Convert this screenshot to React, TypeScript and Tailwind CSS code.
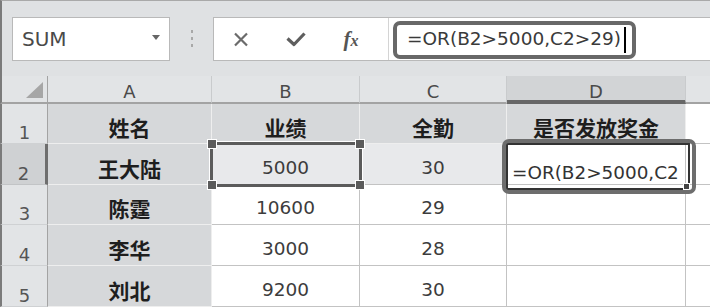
import React from 'react'

type Kind = 'rowhead' | 'rowheadSel' | 'gray' | 'light' | 'white' | 'edge'

const FORMULA = '=OR(B2>5000,C2>29)'

const rows: { n: string; cells: { text?: string; kind: Kind; cjk?: boolean }[] }[] = [
  {
    n: '1',
    cells: [
      { text: '姓名', kind: 'gray', cjk: true },
      { text: '业绩', kind: 'gray', cjk: true },
      { text: '全勤', kind: 'gray', cjk: true },
      { text: '是否发放奖金', kind: 'gray', cjk: true },
      { kind: 'edge' },
    ],
  },
  {
    n: '2',
    cells: [
      { text: '王大陆', kind: 'gray', cjk: true },
      { text: '5000', kind: 'light' },
      { text: '30', kind: 'light' },
      { kind: 'white' },
      { kind: 'edge' },
    ],
  },
  {
    n: '3',
    cells: [
      { text: '陈霆', kind: 'gray', cjk: true },
      { text: '10600', kind: 'white' },
      { text: '29', kind: 'white' },
      { kind: 'white' },
      { kind: 'edge' },
    ],
  },
  {
    n: '4',
    cells: [
      { text: '李华', kind: 'gray', cjk: true },
      { text: '3000', kind: 'white' },
      { text: '28', kind: 'white' },
      { kind: 'white' },
      { kind: 'edge' },
    ],
  },
  {
    n: '5',
    cells: [
      { text: '刘北', kind: 'gray', cjk: true },
      { text: '9200', kind: 'white' },
      { text: '30', kind: 'white' },
      { kind: 'white' },
      { kind: 'edge' },
    ],
  },
]

const cellClass: Record<Kind, string> = {
  rowhead: 'bg-[#e2e4e6] border-l-2 border-l-[#7b7b7b] border-r border-r-[#a3a3a3] border-b border-b-[#cfd1d3]',
  rowheadSel: 'bg-[#cfd1d3] border-l-2 border-l-[#7b7b7b] border-r-[3px] border-r-[#6e6e6e] border-b border-b-[#c2c4c6]',
  gray: 'bg-[#d6d8da] border-r border-r-[#eeeeee] border-b border-b-[#eeeeee]',
  light: 'bg-[#e8e9eb] border-r border-r-[#c3c3c3] border-b border-b-[#c3c3c3]',
  white: 'bg-white border-r border-r-[#c3c3c3] border-b border-b-[#c3c3c3]',
  edge: 'bg-white border-b border-b-[#c3c3c3]',
}

const Handle = ({ x, y }: { x: number; y: number }) => (
  <div
    className="absolute w-[10px] h-[10px] bg-[#5b5b5b] border border-white"
    style={{ left: x - 5, top: y - 5 }}
  />
)

export default function App() {
  return (
    <div className="w-[710px] h-[307px] bg-[#dfe1e3] overflow-hidden font-['DejaVu_Sans',sans-serif]">
      {/* formula bar */}
      <div className="h-[76px] border-t border-t-[#a9a9a9] border-l-2 border-l-[#7b7b7b] flex items-start pt-[16px]">
        <div className="ml-[10px] w-[158px] h-[44px] bg-white border border-[#b9b9b9] flex items-center pl-[9px] pr-[9px]">
          <span className="text-[20px] text-[#4a4a4a] flex-1">SUM</span>
          <span className="w-0 h-0 border-l-[4px] border-r-[4px] border-t-[5px] border-l-transparent border-r-transparent border-t-[#666] mb-[4px]" />
        </div>
        <div className="ml-[21px] mt-[13px] flex flex-col gap-[4px]">
          <span className="w-[2px] h-[3px] bg-[#a8a8a8]" />
          <span className="w-[2px] h-[3px] bg-[#a8a8a8]" />
          <span className="w-[2px] h-[3px] bg-[#a8a8a8]" />
        </div>
        <div className="ml-[20px] flex-1 h-[44px] bg-white border border-[#b9b9b9] border-r-0 flex items-center">
          <div className="w-[174px] shrink-0 flex items-center pl-[16px] gap-[33px]">
            <span className="w-[22px] flex justify-center">
              <svg width="16" height="15" viewBox="0 0 16 15">
                <path d="M2 1.5 L14 13.5 M14 1.5 L2 13.5" stroke="#6b6b6b" strokeWidth="2.2" fill="none" />
              </svg>
            </span>
            <span className="w-[22px] flex justify-center">
              <svg width="20" height="15" viewBox="0 0 20 15">
                <path d="M1.5 6.5 L8 12.5 L18.5 1.5" stroke="#5e5e5e" strokeWidth="3.2" fill="none" strokeLinejoin="round" />
              </svg>
            </span>
            <span className="w-[22px] flex justify-center items-baseline font-['Liberation_Serif',serif] italic font-bold text-[#555]">
              <span className="text-[21px] leading-none">f</span>
              <span className="text-[16px] leading-none">x</span>
            </span>
          </div>
          <div className="flex-1 h-full border-l border-l-[#d4d4d4] flex items-center pl-[4px]">
            <div className="w-[243px] h-[38px] border-4 border-[#686868] rounded-[7px] flex items-center pl-[10px] mt-[1px]">
              <span className="text-[18.5px] text-[#3a3a3a] leading-none whitespace-nowrap">{FORMULA}</span>
              <span className="w-[2px] h-[26px] bg-black ml-[3px]" />
            </div>
          </div>
        </div>
      </div>

      {/* grid */}
      <div className="relative grid grid-cols-[48px_164px_148px_147px_179px_24px] grid-rows-[28px_40px_41px_40px_41px_41px]">
        <div className="bg-[#e2e4e6] border-l-2 border-l-[#7b7b7b] border-r border-r-[#a3a3a3] border-b-2 border-b-[#a3a3a3] flex justify-end items-end pr-[4px] pb-[4px]">
          <svg width="17" height="16" viewBox="0 0 17 16">
            <polygon points="17,0 17,16 0,16" fill="#a6a6a6" />
          </svg>
        </div>
        {['A', 'B', 'C'].map((c) => (
          <div
            key={c}
            className="bg-[#e2e4e6] border-r border-r-[#c9cbcd] border-b-2 border-b-[#a3a3a3] flex items-center justify-center pt-[5px] text-[18px] text-[#4a4a4a] leading-none"
          >
            {c}
          </div>
        ))}
        <div className="bg-[#d2d4d6] border-r border-r-[#c9cbcd] border-b-4 border-b-[#676767] flex items-center justify-center pt-[7px] text-[18px] text-[#4a4a4a] leading-none">
          D
        </div>
        <div className="bg-[#e2e4e6] border-b-2 border-b-[#a3a3a3]" />

        {rows.map((r) => (
          <React.Fragment key={r.n}>
            <div
              className={`${r.n === '2' ? cellClass.rowheadSel : cellClass.rowhead} flex items-end justify-center text-[18px] leading-[20px] text-[#555]`}
            >
              {r.n}
            </div>
            {r.cells.map((c, i) =>
              r.n === '2' && i === 3 ? (
                <div key={i} className={`${cellClass.white} flex items-end pl-[5px] overflow-hidden`}>
                  <span className="flex whitespace-nowrap text-[18.4px] leading-[22px] text-[#333]">
                    <span className="shrink-0">=OR(B2&gt;5000,C2</span>
                    <span className="w-0 overflow-hidden">&gt;29)</span>
                  </span>
                </div>
              ) : (
                <div
                  key={i}
                  className={`${cellClass[c.kind]} ${i === 0 ? 'border-r-[#b5b5b5]' : ''} flex items-center justify-center pt-[7px] ${
                    c.cjk
                      ? "font-['Noto_Sans_CJK_SC',sans-serif] font-bold text-[21px] text-[#1e1e1e]"
                      : 'text-[18.5px] text-[#3c3c3c]'
                  } leading-[22px]`}
                >
                  {c.text}
                </div>
              )
            )}
          </React.Fragment>
        ))}

        {/* selection B2:C2 */}
        <div className="absolute left-[210px] top-[66px] w-[152px] h-[45px] border-[3px] border-[#5b5b5b] outline outline-1 outline-white" />
        <Handle x={212} y={68} />
        <Handle x={360} y={68} />
        <Handle x={212} y={109} />
        <Handle x={360} y={109} />

        {/* editing cell D2 highlight */}
        <div className="absolute left-[506px] top-[67px] w-[184px] h-[47px] border-2 border-[#333]" />
        <div className="absolute left-[683px] top-[107px] w-[7px] h-[7px] bg-[#444] border border-white" />
        <div className="absolute left-[502px] top-[63px] w-[194px] h-[55px] border-4 border-[#6d6d6d] rounded-[7px]" />
      </div>
    </div>
  )
}
